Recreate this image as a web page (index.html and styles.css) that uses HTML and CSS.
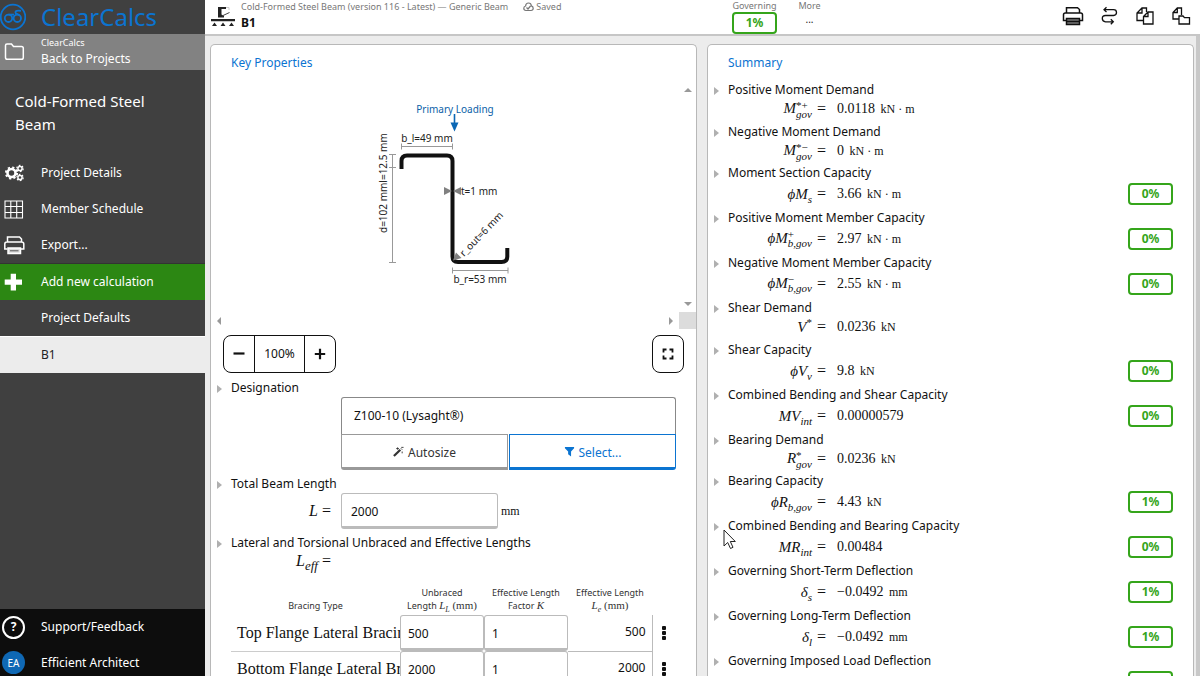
FILE: index.html
```html
<!DOCTYPE html>
<html lang="en">
<head>
<meta charset="utf-8">
<title>ClearCalcs - B1</title>
<link rel="stylesheet" href="styles.css">
</head>
<body>
<div class="app">
  <nav class="sidebar">
    <a class="brand" href="#">
      <svg width="26" height="32" viewBox="0 0 26 32" fill="none" stroke="#0b74d1" stroke-width="1.8"><circle cx="13" cy="16" r="12.3"/><circle cx="8.500" cy="17.300" r="3.700"/><path d="M8.500 13.600H14"/><circle cx="17.300" cy="17.300" r="3.700"/><path d="M19.500 14.300L15.800 12.300C14.300 9.500 18 9.300 21 9.800"/></svg>
      <span>ClearCalcs</span>
    </a>
    <a class="nav-item back" href="#">
      <svg width="30" height="24" viewBox="0 0 30 24" fill="none" stroke="#fff" stroke-width="1.5"><path d="M5.500 5.500Q5.500 4 7 4H11.500L13.500 6.500H21.500Q23.300 6.500 23.300 8.300V17.500Q23.300 19.300 21.500 19.300H7.300Q5.500 19.300 5.500 17.500Z"/></svg>
      <span class="back-text"><small>ClearCalcs</small><span>Back to Projects</span></span>
    </a>
    <h1 class="project">Cold-Formed Steel Beam</h1>
    <a class="nav-item" href="#">
      <svg width="30" height="24" viewBox="0 0 30 24" fill="none" stroke="#fff"><circle cx="11.500" cy="12" r="4" stroke-width="2.600"/><circle cx="11.500" cy="12" r="5.600" stroke-width="2" stroke-dasharray="2.200 2.200"/><circle cx="20" cy="7.500" r="2.100" stroke-width="1.500"/><circle cx="20" cy="7.500" r="3.200" stroke-width="1.200" stroke-dasharray="1.700 1.650"/><circle cx="20" cy="16.500" r="2.100" stroke-width="1.500"/><circle cx="20" cy="16.500" r="3.200" stroke-width="1.200" stroke-dasharray="1.700 1.650"/></svg>
      <span>Project Details</span>
    </a>
    <a class="nav-item" href="#">
      <svg width="30" height="24" viewBox="0 0 30 24" fill="none" stroke="#fff" stroke-width="1.100"><path d="M5 4H22.500V21H5ZM5 9.500H22.500M5 15.500H22.500M10.800 4V21M16.700 4V21"/></svg>
      <span>Member Schedule</span>
    </a>
    <a class="nav-item" href="#">
      <svg width="30" height="24" viewBox="0 0 30 24" fill="none" stroke="#fff" stroke-width="1.500"><path d="M7.500 9V4H19.500L21.500 6V9M7.500 16H4.800V11Q4.800 9 7 9H21.500Q23.800 9 23.800 11V16H21"/><path fill="#ddd" d="M8 15H20.500V20.500H8Z"/><path stroke="#555" stroke-width="1" d="M10 17.800H18.500"/></svg>
      <span>Export...</span>
    </a>
    <button class="nav-item add" type="button">
      <svg width="30" height="24" viewBox="0 0 30 24"><path fill="#fff" d="M10.700 3.700H16V9.500H22V14.700H16V20.500H10.700V14.700H4.700V9.500H10.700Z"/></svg>
      <span>Add new calculation</span>
    </button>
    <a class="nav-item plain" href="#"><span>Project Defaults</span></a>
    <a class="nav-item plain current" href="#"><span>B1</span></a>
    <div class="side-foot">
      <a class="nav-item" href="#"><span class="round help">?</span><span>Support/Feedback</span></a>
      <a class="nav-item" href="#"><span class="round avatar">EA</span><span>Efficient Architect</span></a>
    </div>
  </nav>

  <div class="main">
    <header class="topbar">
      <svg class="beam" width="24" height="24" viewBox="0 0 24 24"><path fill="#222" d="M7 2H15V4H10.500V9.500L13 11V12.500H7ZM0 14H24V16.300H0Z"/><path fill="#222" d="M3.500 17.500L6 21H1ZM12 17.500L14.500 21H9.500ZM20.500 17.500L23 21H18Z"/><path stroke="#444" d="M11 11L18.500 7.500" fill="none"/><path stroke="#ccc" d="M15 2.500H18V5" fill="none"/></svg>
      <div class="doc">
        <div class="doc-meta"><span>Cold-Formed Steel Beam (version 116 - Latest) — Generic Beam</span>
          <span class="saved"><svg width="11" height="10" viewBox="0 0 11 10" fill="none" stroke="#777" stroke-width="1.200"><path d="M3 8.500Q.8 8.300 .8 6.300T2.600 4Q2.800 1 5.500 1T8.300 3.800Q10.200 4.200 10.200 6.300T8 8.500ZM3.500 5.500L5 7L7.500 4"/></svg>Saved</span></div>
        <strong>B1</strong>
      </div>
      <div class="stat"><span>Governing</span><b class="badge">1%</b></div>
      <div class="stat more"><span>More</span><button type="button" aria-label="More actions">...</button></div>
      <div class="tools">
        <button type="button" aria-label="Print"><svg width="22" height="22" viewBox="0 0 22 22" fill="none" stroke="#111" stroke-width="1.500"><path d="M4.500 8V2.800H15.500L17.500 4.500V8M4 15.500H1.500V9.800Q1.500 8 3.300 8H18.700Q20.500 8 20.500 9.800V15.500H18"/><path fill="#777" d="M4.500 13.500H17.500V19.500H4.500Z"/><path d="M4.500 16.500H17.500"/></svg></button>
        <button type="button" aria-label="Replace"><svg width="22" height="22" viewBox="0 0 22 22" fill="none" stroke="#111" stroke-width="1.300"><path d="M6 4.700H15.500Q18.500 4.700 18.500 7.500T15.500 10.500H7.500Q4.300 10.500 4.300 13.500T7.500 16.800H15M8.500 2.300L6 4.700L8.500 7M12.800 14.300L15.300 16.800L12.800 19.300"/></svg></button>
        <button type="button" aria-label="Duplicate"><svg width="22" height="22" viewBox="0 0 22 22" fill="none" stroke="#111" stroke-width="1.300"><path d="M9 15.500H3V8L8 3H12.500V7M8 3V8H3"/><path d="M9.500 11.500L14 7H19V19H9.500ZM14 7V11.500H9.500"/></svg></button>
        <button type="button" aria-label="Copy to project"><svg width="22" height="22" viewBox="0 0 22 22" fill="none" stroke="#111" stroke-width="1.300"><path d="M9 14H3V7.500L7.300 3H11.500V10M7.300 3V7.500H3"/><path d="M9 11H13L14.500 12.700H19.500V19H9Z"/></svg></button>
      </div>
    </header>

    <main class="panels">
      <section class="panel">
        <h2>Key Properties</h2>
        <div class="viewer">
          <svg class="section" viewBox="211 82 468 230" width="468" height="230">
            <text x="455" y="113" class="load" text-anchor="middle">Primary Loading</text>
            <path d="M454.500 114V125" stroke="#0b67b4" stroke-width="1.600"/><path d="M450.500 122.500H458.500L454.500 131.500Z" fill="#0b67b4"/>
            <text x="427" y="142" text-anchor="middle">b_l=49 mm</text>
            <g stroke="#999" fill="none"><path d="M401.500 146.500H452.500M401.500 143.500V149.500M452.500 143.500V149.500"/><path d="M392.500 154.500V262.500M389 154.500H396M389 167.500H396M389 262.500H396M452.500 270.500H508M452.500 267.500V273.500M508 267.500V273.500"/></g>
            <path d="M401.500 169V161Q401.500 155.500 407 155.500H447Q452.500 155.500 452.500 161V256.500Q452.500 262 458 262H501.500Q507.300 262 507.300 256.500V248" fill="none" stroke="#111" stroke-width="4"/>
            <path d="M444 187V195L452 191ZM461 187V195L453 191Z" fill="#808080"/>
            <text x="461" y="195">t=1 mm</text>
            <path d="M453 260.500L456 252.500L461.500 258Z" fill="#808080"/>
            <text transform="translate(464 257) rotate(-46)">r_out=6 mm</text>
            <text transform="translate(387 233) rotate(-90)">d=102 mml=12.5 mm</text>
            <text x="480" y="283" text-anchor="middle">b_r=53 mm</text>
          </svg>
          <div class="rail vert"><i class="up"></i><i class="down"></i></div>
          <div class="rail horiz"><i class="left"></i><i class="right"></i></div>
          <div class="corner"></div>
        </div>
        <div class="zoom-row">
          <div class="zoom">
            <button type="button" aria-label="Zoom out"><svg width="12" height="12" viewBox="0 0 12 12"><path d="M.5 5.500H11.500" stroke="#111" stroke-width="2.200"/></svg></button>
            <span>100%</span>
            <button type="button" aria-label="Zoom in"><svg width="12" height="12" viewBox="0 0 12 12"><path d="M.8 6H11.200M6 .8V11.200" stroke="#111" stroke-width="2.200"/></svg></button>
          </div>
          <button class="full" type="button" aria-label="Full screen"><svg width="12" height="12" viewBox="0 0 12 12" fill="none" stroke="#111" stroke-width="1.800"><path d="M1.500 4.500V1.500H4.500M7.500 1.500H10.500V4.500M10.500 7.500V10.500H7.500M4.500 10.500H1.500V7.500"/></svg></button>
        </div>

        <div class="label caret">Designation</div>
        <div class="picker">
          <div class="picked">Z100-10 (Lysaght®)</div>
          <button type="button" class="auto"><svg width="11" height="11" viewBox="0 0 12 12" fill="none" stroke="#333"><path d="M1 11L8 4" stroke-width="2.400"/><path d="M8.500 2.500L10 4M5 1.500V4M3.500 2.800H6.500M10 6V8M9 1.500H11.500"/></svg>Autosize</button>
          <button type="button" class="select"><svg width="11" height="11" viewBox="0 0 12 12"><path fill="#0b74d1" d="M1 1H11V2.500L7.700 6V11.500L4.500 9V6L1 2.500Z"/></svg>Select...</button>
        </div>

        <label class="label caret" for="len">Total Beam Length</label>
        <div class="field">
          <span class="math"><i>L</i> =</span>
          <input id="len" type="text" value="2000">
          <span class="unit">mm</span>
        </div>

        <div class="label caret">Lateral and Torsional Unbraced and Effective Lengths</div>
        <div class="field leff"><span class="math"><i>L<sub>eff</sub></i> =</span></div>

        <table class="bracing">
          <colgroup><col><col class="c-num"><col class="c-num"><col class="c-num"><col class="c-menu"></colgroup>
          <thead><tr><th>Bracing Type</th><th>Unbraced<br>Length <span class="tex"><i>L<sub>L</sub></i> (mm)</span></th><th>Effective Length<br>Factor <span class="tex"><i>K</i></span></th><th>Effective Length<br><span class="tex"><i>L<sub>e</sub></i> (mm)</span></th><td></td></tr></thead>
          <tbody>
            <tr><td class="name">Top Flange Lateral Bracing</td><td><input aria-label="Top flange unbraced length" value="500"></td><td><input aria-label="Top flange factor K" value="1"></td><td class="out">500</td><td><button type="button" class="kebab" aria-label="Row menu"><i></i><i></i><i></i></button></td></tr>
            <tr><td class="name">Bottom Flange Lateral Bracing</td><td><input aria-label="Bottom flange unbraced length" value="2000"></td><td><input aria-label="Bottom flange factor K" value="1"></td><td class="out">2000</td><td><button type="button" class="kebab" aria-label="Row menu"><i></i><i></i><i></i></button></td></tr>
          </tbody>
        </table>
      </section>

      <section class="panel">
        <h2>Summary</h2>
        <div class="row short"><div class="label caret">Positive Moment Demand</div><div class="eq"><span class="lhs"><i>M</i><span class="ss"><span>*+</span><i>gov</i></span></span><span>=</span><span class="val">0.0118 <small>kN · m</small></span></div></div>
        <div class="row shorter"><div class="label caret">Negative Moment Demand</div><div class="eq"><span class="lhs"><i>M</i><span class="ss"><span>*−</span><i>gov</i></span></span><span>=</span><span class="val">0 <small>kN · m</small></span></div></div>
        <div class="row"><div class="label caret">Moment Section Capacity</div><div class="eq"><span class="lhs"><i>ϕM<sub>s</sub></i></span><span>=</span><span class="val">3.66 <small>kN · m</small></span></div><b class="badge">0%</b></div>
        <div class="row"><div class="label caret">Positive Moment Member Capacity</div><div class="eq"><span class="lhs"><i>ϕM</i><span class="ss"><span>+</span><i>b,gov</i></span></span><span>=</span><span class="val">2.97 <small>kN · m</small></span></div><b class="badge">0%</b></div>
        <div class="row"><div class="label caret">Negative Moment Member Capacity</div><div class="eq"><span class="lhs"><i>ϕM</i><span class="ss"><span>−</span><i>b,gov</i></span></span><span>=</span><span class="val">2.55 <small>kN · m</small></span></div><b class="badge">0%</b></div>
        <div class="row short"><div class="label caret">Shear Demand</div><div class="eq"><span class="lhs"><i>V</i><sup>*</sup></span><span>=</span><span class="val">0.0236 <small>kN</small></span></div></div>
        <div class="row"><div class="label caret">Shear Capacity</div><div class="eq"><span class="lhs"><i>ϕV<sub>v</sub></i></span><span>=</span><span class="val">9.8 <small>kN</small></span></div><b class="badge">0%</b></div>
        <div class="row"><div class="label caret">Combined Bending and Shear Capacity</div><div class="eq"><span class="lhs"><i>MV<sub>int</sub></i></span><span>=</span><span class="val">0.00000579</span></div><b class="badge">0%</b></div>
        <div class="row shorter"><div class="label caret">Bearing Demand</div><div class="eq"><span class="lhs"><i>R</i><span class="ss"><span>*</span><i>gov</i></span></span><span>=</span><span class="val">0.0236 <small>kN</small></span></div></div>
        <div class="row"><div class="label caret">Bearing Capacity</div><div class="eq"><span class="lhs"><i>ϕR<sub>b,gov</sub></i></span><span>=</span><span class="val">4.43 <small>kN</small></span></div><b class="badge">1%</b></div>
        <div class="row"><div class="label caret">Combined Bending and Bearing Capacity</div><div class="eq"><span class="lhs"><i>MR<sub>int</sub></i></span><span>=</span><span class="val">0.00484</span></div><b class="badge">0%</b>
          <svg class="pointer" width="14" height="21" viewBox="0 0 14 21"><path d="M1 1V17L4.700 13.500L7.500 19.500L10 18.300L7.300 12.500H12.300Z" fill="#fff" stroke="#222"/></svg></div>
        <div class="row"><div class="label caret">Governing Short-Term Deflection</div><div class="eq"><span class="lhs"><i>δ<sub>s</sub></i></span><span>=</span><span class="val">−0.0492 <small>mm</small></span></div><b class="badge">1%</b></div>
        <div class="row"><div class="label caret">Governing Long-Term Deflection</div><div class="eq"><span class="lhs"><i>δ<sub>l</sub></i></span><span>=</span><span class="val">−0.0492 <small>mm</small></span></div><b class="badge">1%</b></div>
        <div class="row"><div class="label caret">Governing Imposed Load Deflection</div><div class="eq"><span class="lhs"><i>δ<sub>q</sub></i></span><span>=</span><span class="val">0 <small>mm</small></span></div><b class="badge">0%</b></div>
      </section>
    </main>
  </div>
</div>
</body>
</html>
```

FILE: styles.css
```css
* { box-sizing: border-box; }
body { margin: 0; font: 12px/18px "Noto Sans", sans-serif; color: #111; background: #ececec; }
button { font: inherit; color: inherit; background: none; border: 0; padding: 0; margin: 0; }
input { font: inherit; color: inherit; min-width: 0; }
a { color: inherit; text-decoration: none; }
svg { display: block; flex: none; }

.app { display: flex; height: 100vh; overflow: hidden; }

/* Sidebar */
.sidebar { width: 205px; flex: none; display: flex; flex-direction: column; background: #404040; color: #fff; }
.brand { display: flex; align-items: center; gap: 15px; height: 34px; color: #0b74d1; font-size: 24px; line-height: 32px; }
.nav-item { display: flex; align-items: center; gap: 11px; width: 100%; height: 36px; text-align: left; }
.back { background: #828282; }
.back-text { display: flex; flex-direction: column; }
.back-text small { font-size: 9px; line-height: 14px; }
.project { margin: 0; padding: 20px 40px 19px 15px; font-size: 15px; line-height: 23px; font-weight: 400; }
.add { height: 37px; background: #2c8713; border-top: 1px solid #333; }
.plain { padding-left: 41px; }
.current { height: 37px; background: #ececec; color: #222; border-top: 1px solid #fff; }
.side-foot { margin-top: auto; background: #0d0d0d; }
.side-foot .nav-item { gap: 16px; }
.side-foot .nav-item:last-child { height: 31px; padding-top: 4px; }
.round { width: 23px; height: 23px; margin-left: 2px; border-radius: 50%; flex: none; display: grid; place-items: center; }
.help { border: 2px solid #fff; font-weight: 700; }
.avatar { background: #0f68b4; font-size: 10px; }

/* Top bar */
.main { flex: 1; min-width: 0; display: flex; flex-direction: column; }
.topbar { display: flex; height: 36px; flex: none; padding-left: 6px; background: #fff; border-bottom: 2px solid #c6c6c6; }
.beam { margin-top: 5px; }
.doc { width: 497px; padding-left: 6px; }
.doc-meta { display: flex; gap: 15px; font-size: 9px; line-height: 14px; color: #777; white-space: nowrap; }
.saved { display: flex; align-items: center; gap: 2px; }
.doc strong { display: block; line-height: 17px; }
.stat { width: 45px; display: flex; flex-direction: column; align-items: center; font-size: 9px; line-height: 12px; color: #777; }
.more { margin-left: 10px; }
.more button { color: #222; font-size: 10px; line-height: 14px; }
.badge { width: 45px; height: 22px; flex: none; display: grid; place-items: center; border: 2px solid #35a51b; border-radius: 4px; background: #fff; color: #35a51b; font-size: 12px; line-height: 16px; }
.tools { display: flex; align-items: flex-start; gap: 14px; margin-left: auto; padding: 5px 8px 0 0; }

/* Panels */
.panels { flex: 1; min-height: 0; display: grid; grid-template-columns: 1fr 1fr; gap: 10px; padding: 8px 2px 0 5px; border-right: 4px solid #c8c8c8; }
.panel { min-width: 0; min-height: 0; overflow: hidden; background: #fff; border: 1px solid #b8b8b8; border-bottom: 0; border-radius: 5px 5px 0 0; }
h2 { margin: 0; padding: 9px 20px 10px; font-size: 12px; line-height: 18px; font-weight: 400; color: #0b74d1; }
.label { position: relative; display: block; padding-left: 20px; }
.caret::before { content: ""; position: absolute; left: 6px; top: 6px; border: 4px solid transparent; border-left: 5px solid #b0b0b0; border-right: 0; }

.viewer { display: grid; grid-template-columns: 1fr 17px; grid-template-rows: 230px 17px; }
.section { justify-self: center; }
.section text { font: 10px "Noto Sans", sans-serif; fill: #222; }
.section .load { fill: #0b5fa8; }
.rail { display: flex; align-items: center; justify-content: space-between; }
.vert { flex-direction: column; padding: 6px 0; }
.horiz { padding: 0 6px; }
.rail i { border: 4px solid transparent; }
.rail .up { border-top: 0; border-bottom-color: #999; }
.rail .down { border-bottom: 0; border-top-color: #999; }
.rail .left { border-left: 0; border-right-color: #999; }
.rail .right { border-right: 0; border-left-color: #999; }
.corner { background: #dcdcdc; }

.zoom-row { display: flex; justify-content: space-between; padding: 6px 12px; }
.zoom { display: grid; grid-template-columns: 30px 51px 30px; height: 38px; border: 1px solid #111; border-radius: 8px; }
.zoom > * { display: grid; place-items: center; }
.zoom span { border: solid #111; border-width: 0 1px; }
.full { width: 32px; height: 38px; display: grid; place-items: center; border: 1px solid #111; border-radius: 8px; }

.picker { display: grid; grid-template-columns: 1fr 1fr; column-gap: 1px; margin: 0 20px 5px 130px; }
.picked { grid-column: 1 / 3; height: 37px; padding: 9px 12px; border: 1px solid #888; border-bottom: 0; border-radius: 3px 3px 0 0; }
.picker button { height: 36px; padding-top: 3px; display: flex; align-items: center; justify-content: center; gap: 4px; border: 1px solid #999; border-bottom-width: 3px; }
.picker svg { margin-bottom: 3px; }
.picker .auto { border-bottom-left-radius: 3px; color: #333; }
.picker .select { border-color: #0b74d1; color: #0b74d1; border-bottom-right-radius: 3px; }

.field { display: flex; align-items: center; margin-bottom: 5px; }
.math { width: 120px; margin-right: 10px; text-align: right; font: 16px/18px "Liberation Serif", serif; }
.math sub { font-size: 13px; }
.field input { width: 157px; height: 36px; padding: 2px 9px 0; border: 1px solid #bbb; border-bottom-width: 3px; border-radius: 3px; background: #fff; }
.unit { padding-left: 3px; font: 12px/16px "Liberation Serif", serif; }
sub, sup { font-size: 11px; line-height: 0; }
.leff { margin-bottom: 13px; }

.bracing { width: calc(100% - 40px); margin-left: 20px; table-layout: fixed; border-collapse: collapse; }
.c-num { width: 84px; }
.c-menu { width: 24px; }
.bracing td, .bracing th { padding: 0; }
.bracing th { height: 32px; font-size: 9px; line-height: 12px; font-weight: 400; color: #333; vertical-align: bottom; padding-bottom: 3px; white-space: nowrap; }
.tex { font: 11px/12px "Liberation Serif", serif; }
.tex sub { font-size: 8px; }
.bracing .name { padding-left: 6px; font: 16px/20px "Liberation Serif", serif; white-space: nowrap; overflow: hidden; border-bottom: 1px solid #ccc; }
.bracing input { display: block; width: 100%; height: 36px; padding: 3px 7px 0; border: 1px solid #bbb; border-bottom-width: 3px; border-radius: 3px; background: #fff; }
.bracing .out { padding: 0 6px 2px 0; text-align: right; border-right: 1px solid #bbb; border-bottom: 1px solid #bbb; }
.kebab { display: grid; gap: 1px; margin: 0 auto; }
.kebab i { width: 4px; height: 4px; border-radius: 1px; background: #111; }

/* Results */
.row { position: relative; display: grid; grid-template-columns: 1fr 45px; grid-template-rows: 18px 23px; height: 45px; padding-right: 20px; }
.row .label { grid-column: 1 / 3; }
.row .badge { align-self: end; }
.row.short { height: 42px; grid-template-rows: 18px 20px; }
.row.shorter { height: 41px; grid-template-rows: 18px 20px; }
h2 + .row { margin-top: -1px; }
.eq { display: flex; align-items: center; gap: 5px; font: 14px/18px "Liberation Serif", serif; white-space: nowrap; }
.eq > span:nth-child(2) { font-size: 16px; }
.lhs { width: 104px; font-size: 15px; text-align: right; }
.val { padding-left: 6px; }
.val small { padding-left: 2px; font-size: 12px; }
.ss { display: inline-flex; flex-direction: column; vertical-align: middle; text-align: left; font-size: 11px; line-height: 9px; }
.pointer { position: absolute; left: 15px; top: 12px; }
```
